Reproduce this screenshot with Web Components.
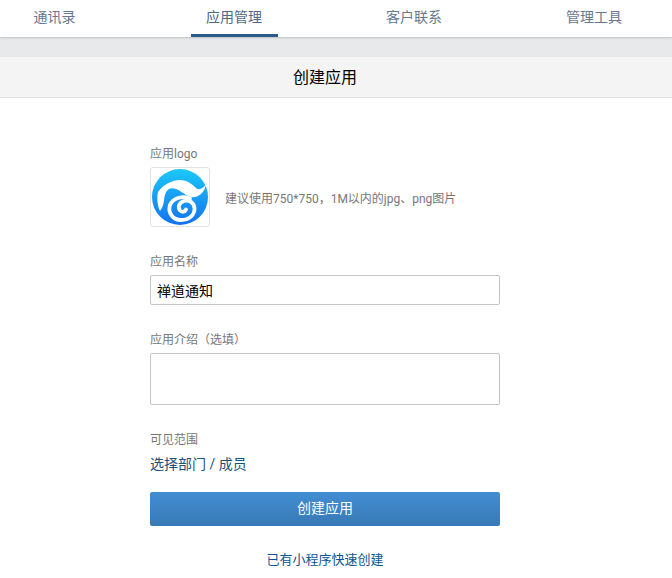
<!DOCTYPE html>
<html lang="zh">
<head>
<meta charset="utf-8">
<title>创建应用</title>
<style>
    html, body { margin: 0; padding: 0; background: #fff; }
    body { font-family: Roboto, "Noto Sans CJK SC", sans-serif; height: 578px; overflow: hidden; }
</style>
</head>
<body>
<app-page>
    <top-nav></top-nav>
    <title-bar>创建应用</title-bar>
    <create-form></create-form>
</app-page>

<template id="page-template">
<style>
    :host { display: flex; flex-direction: column; background: #fff; }
</style>
<slot></slot>
</template>

<template id="nav-template">
<style>
    :host {
        display: flex;
        height: 37px;
        padding-left: 18px;
        background: #fff;
        box-shadow: 0 1px 2px rgba(0, 0, 0, .18);
        position: relative;
        gap: 93px;
        font-size: 14px;
        color: #66778f;
    }
    a {
        display: block;
        padding: 0 15.5px;
        height: 37px;
        line-height: 34px;
        box-sizing: border-box;
    }
    a:first-of-type { padding-right: 15px; margin-right: 7px; }
    a.active {
        color: #4f6788;
        border-bottom: 3px solid #2a5a8c;
    }
</style>
<a>通讯录</a>
<a class="active">应用管理</a>
<a>客户联系</a>
<a>管理工具</a>
</template>

<template id="title-template">
<style>
    :host {
        display: block;
        height: 61px;
        box-sizing: border-box;
        background: linear-gradient(#e8e9eb 20px, #f4f4f4 20px);
        border-bottom: 1px solid #e0e0e0;
        padding: 21px 22px 0 0;
        line-height: 40px;
        text-align: center;
        font-size: 16px;
        color: #000;
    }
</style>
<slot></slot>
</template>

<template id="form-template">
<style>
    :host {
        display: flex;
        flex-direction: column;
        width: 350px;
        margin-left: 150px;
        padding-top: 47px;
        font-size: 12px;
        color: #777;
    }
    label { display: block; height: 18px; line-height: 18px; }
    .logo-row { display: flex; align-items: center; gap: 15px; margin-top: 4px; }
    .logo {
        width: 60px;
        height: 60px;
        box-sizing: border-box;
        border: 1px solid #e2e2e2;
        border-radius: 3px;
        display: flex;
        align-items: center;
        justify-content: center;
    }
    .name-label { margin-top: 26px; }
    .box {
        box-sizing: border-box;
        width: 350px;
        border: 1px solid #c4c4c4;
        border-radius: 2px;
        margin-top: 4px;
    }
    .input {
        height: 30px;
        line-height: 30px;
        padding-left: 6px;
        font-size: 14px;
        color: #000;
    }
    .intro-label { margin-top: 26px; }
    .textarea { height: 52px; }
    .scope-label { margin-top: 26px; }
    .scope { margin-top: 5px; height: 20px; line-height: 20px; font-size: 14px; color: #1d4f78; }
    .submit {
        margin-top: 18px;
        height: 34px;
        line-height: 33px;
        text-align: center;
        color: #fff;
        font-size: 14px;
        border-radius: 2px;
        background: linear-gradient(#428ed2, #3879b6);
    }
    .quick { margin-top: 24px; text-align: center; font-size: 13px; line-height: 20px; color: #0b5590; }
</style>
<label>应用logo</label>
<div class="logo-row">
    <div class="logo">
        <svg width="56" height="56" viewBox="0 0 56 56">
            <defs>
                <linearGradient id="logo-fill" x1="0" y1="0" x2="0" y2="1">
                    <stop offset="0" stop-color="#1cc8f8"/>
                    <stop offset="1" stop-color="#1272f0"/>
                </linearGradient>
            </defs>
            <circle cx="28" cy="28" r="28" fill="url(#logo-fill)"/>
            <path d="M54 15C53.500 20 50 25.500 45 27.500C38 30 33 25 28 22C24 19.500 20 18.500 17 20C13.500 22 12.500 27 12 31.500C11.500 35.500 10.500 38.500 8 42C5.500 37 4.500 29 6 23C10 17 19 11 28 11C35 11 40 15 44 19C47 21.500 51 20 54 15Z" fill="#fff"/>
            <path d="M38 29.500C30 26.500 21 29 18 36C15.500 44 21 51 29 51C37 51 43 46 42.500 39C42 33.500 37 30.500 32 32C27 33.500 25.500 38.500 28 41.500C30 43.500 33 43 34 40.500" fill="none" stroke="#fff" stroke-width="3.8" stroke-linecap="round"/>
        </svg>
    </div>
    <span>建议使用750*750，1M以内的jpg、png图片</span>
</div>
<label class="name-label">应用名称</label>
<div class="box input">禅道通知</div>
<label class="intro-label">应用介绍（选填）</label>
<div class="box textarea"></div>
<label class="scope-label">可见范围</label>
<div class="scope">选择部门 / 成员</div>
<div class="submit">创建应用</div>
<div class="quick">已有小程序快速创建</div>
</template>

<script>
    // every element just clones its own template into an open shadow root
    function register (tag, templateId) {
        customElements.define(tag, class extends HTMLElement {
            constructor () {
                super ();
                this.attachShadow ({mode: "open"});
            }

            connectedCallback () {
                const template = document.getElementById(templateId);
                this.shadowRoot.appendChild(template.content.cloneNode(true));
            }
        });
    }

    register("app-page", "page-template");
    register("top-nav", "nav-template");
    register("title-bar", "title-template");
    register("create-form", "form-template");
</script>
</body>
</html>
